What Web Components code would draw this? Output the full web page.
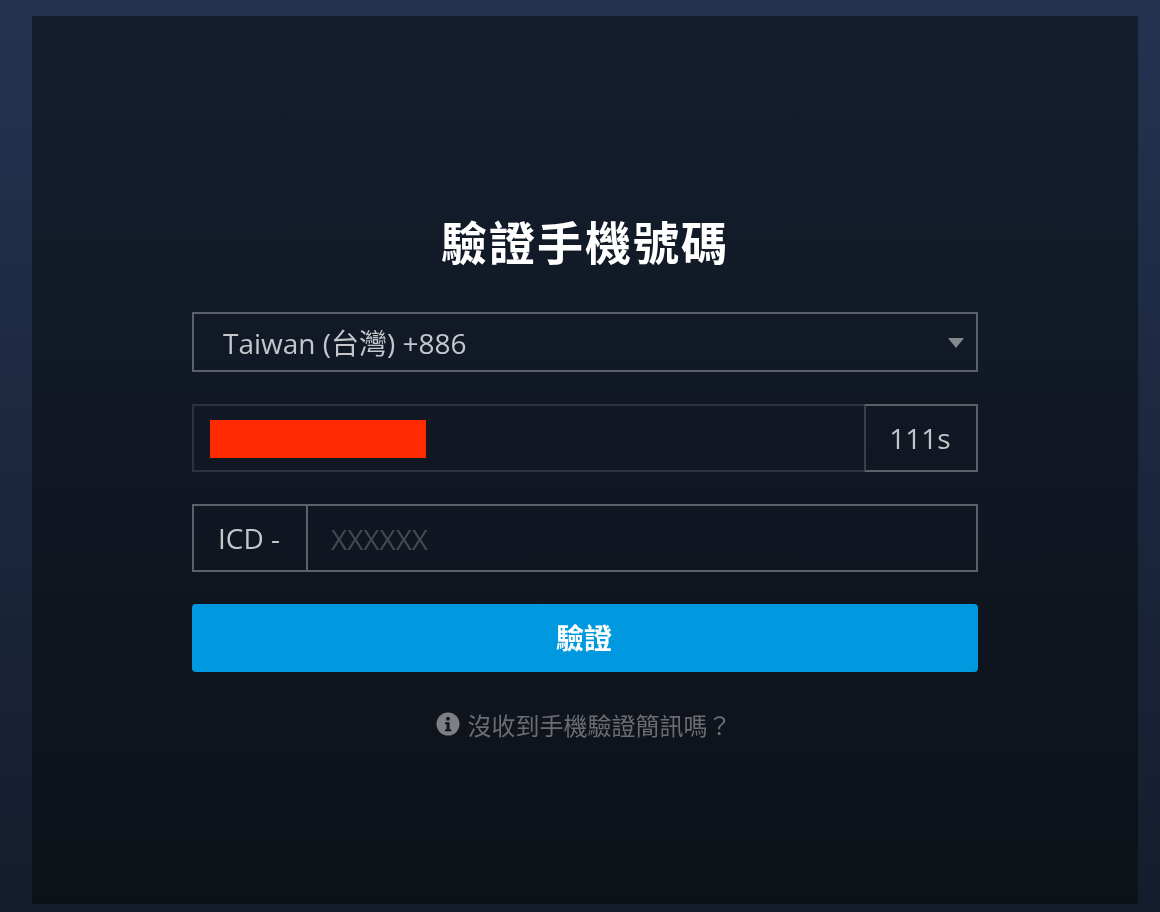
<!DOCTYPE html>
<html lang="zh-Hant">
<head>
<meta charset="utf-8">
<title>驗證手機號碼</title>
<style>
    html, body {
        margin: 0;
        height: 100%;
    }
    body {
        font-family: "Open Sans", "Noto Sans CJK TC", sans-serif;
        background: linear-gradient(#233350, #151c2d);
    }
</style>
</head>
<body>
<verify-page>
    <verify-card>
        <h-title>驗證手機號碼</h-title>
        <country-select>Taiwan (台灣) +886</country-select>
        <phone-field>111s</phone-field>
        <code-field prefix="ICD -" placeholder="XXXXXX"></code-field>
        <verify-button>驗證</verify-button>
        <help-link>沒收到手機驗證簡訊嗎？</help-link>
    </verify-card>
</verify-page>

<script>
    class VerifyPage extends HTMLElement {
        constructor() {
            super()
            this.attachShadow({ mode: 'open' })
            this.shadowRoot.innerHTML = `
            <style>
                :host {
                    display: flex;
                    box-sizing: border-box;
                    height: 912px;
                    padding: 16px 22px 8px 32px;
                }
            </style>
            <slot></slot>
        `
        }
    }

    class VerifyCard extends HTMLElement {
        constructor() {
            super()
            this.attachShadow({ mode: 'open' })
            this.shadowRoot.innerHTML = `
            <style>
                :host {
                    flex: 1;
                    display: flex;
                    flex-direction: column;
                    gap: 32px;
                    box-sizing: border-box;
                    padding: 190px 160px 0;
                    background: linear-gradient(#141e2e, #0d1118);
                    will-change: transform;
                }
            </style>
            <slot></slot>
        `
        }
    }

    class HTitle extends HTMLElement {
        constructor() {
            super()
            this.attachShadow({ mode: 'open' })
            this.shadowRoot.innerHTML = `
            <style>
                :host {
                    display: block;
                    height: 72px;
                    line-height: 72px;
                    margin-bottom: 2px;
                    text-align: center;
                    font-size: 46px;
                    font-weight: 600;
                    letter-spacing: 2px;
                    color: #fff;
                }
            </style>
            <slot></slot>
        `
        }
    }

    class CountrySelect extends HTMLElement {
        constructor() {
            super()
            this.attachShadow({ mode: 'open' })
            this.shadowRoot.innerHTML = `
            <style>
                :host {
                    display: flex;
                    align-items: center;
                    justify-content: space-between;
                    box-sizing: border-box;
                    height: 60px;
                    padding: 0 12px 0 29px;
                    border: 2px solid #5c6069;
                    font-size: 28px;
                    color: #c4c6c9;
                }
                svg {
                    display: block;
                    margin-top: 2px;
                }
            </style>
            <slot></slot>
            <svg width="16" height="10" viewBox="0 0 16 10"><path d="M0 0h16L8 10z" fill="#85888d"/></svg>
        `
        }
    }

    class PhoneField extends HTMLElement {
        constructor() {
            super()
            this.attachShadow({ mode: 'open' })
            this.shadowRoot.innerHTML = `
            <style>
                :host {
                    display: flex;
                    height: 68px;
                    font-size: 28px;
                    color: #c4c6c9;
                }
                .input {
                    flex: 1;
                    display: flex;
                    align-items: center;
                    box-sizing: border-box;
                    padding: 1px 0 0 16px;
                    border: 2px solid #2d323d;
                    border-right: 0;
                }
                .mask {
                    width: 216px;
                    height: 38px;
                    background: #ff2a00;
                }
                .timer {
                    display: flex;
                    align-items: center;
                    justify-content: center;
                    box-sizing: border-box;
                    width: 114px;
                    padding-right: 2px;
                    border: 2px solid #5c6069;
                    border-left-color: #3b3f49;
                }
            </style>
            <div class="input"><div class="mask"></div></div>
            <div class="timer"><slot></slot></div>
        `
        }
    }

    class CodeField extends HTMLElement {
        constructor() {
            super()
            this.attachShadow({ mode: 'open' })
            this.shadowRoot.innerHTML = `
            <style>
                :host {
                    display: flex;
                    box-sizing: border-box;
                    height: 68px;
                    border: 2px solid #5c6069;
                    font-size: 28px;
                    color: #c4c6c9;
                }
                .prefix {
                    display: flex;
                    align-items: center;
                    justify-content: center;
                    box-sizing: border-box;
                    width: 114px;
                    padding-right: 2px;
                    border-right: 2px solid #5c6069;
                }
                .placeholder {
                    display: flex;
                    align-items: center;
                    padding: 2px 0 0 23px;
                    color: #454850;
                }
            </style>
            <div class="prefix">${this.getAttribute('prefix')}</div>
            <div class="placeholder">${this.getAttribute('placeholder')}</div>
        `
        }
    }

    class VerifyButton extends HTMLElement {
        constructor() {
            super()
            this.attachShadow({ mode: 'open' })
            this.shadowRoot.innerHTML = `
            <style>
                :host {
                    display: flex;
                    align-items: center;
                    justify-content: center;
                    height: 68px;
                    padding: 0 2px 2px 0;
                    box-sizing: border-box;
                    border-radius: 4px;
                    background: #0098de;
                    font-size: 28px;
                    font-weight: 600;
                    color: #fff;
                }
            </style>
            <slot></slot>
        `
        }
    }

    class HelpLink extends HTMLElement {
        constructor() {
            super()
            this.attachShadow({ mode: 'open' })
            this.shadowRoot.innerHTML = `
            <style>
                :host {
                    display: flex;
                    align-items: center;
                    justify-content: center;
                    gap: 8px;
                    height: 44px;
                    margin: -2px 3px 0 0;
                    font-size: 24px;
                    color: #6b6d72;
                }
                svg {
                    display: block;
                }
            </style>
            <svg width="24" height="24" viewBox="0 0 24 24">
                <circle cx="12" cy="12" r="11.5" fill="#7d7f84"/>
                <circle cx="12" cy="6.8" r="2" fill="#11151e"/>
                <path d="M9 10.2h4.6v7h1.6v2H9v-2h1.6v-5H9z" fill="#11151e"/>
            </svg>
            <span><slot></slot></span>
        `
        }
    }

    window.customElements.define('verify-page', VerifyPage)
    window.customElements.define('verify-card', VerifyCard)
    window.customElements.define('h-title', HTitle)
    window.customElements.define('country-select', CountrySelect)
    window.customElements.define('phone-field', PhoneField)
    window.customElements.define('code-field', CodeField)
    window.customElements.define('verify-button', VerifyButton)
    window.customElements.define('help-link', HelpLink)
</script>
</body>
</html>
